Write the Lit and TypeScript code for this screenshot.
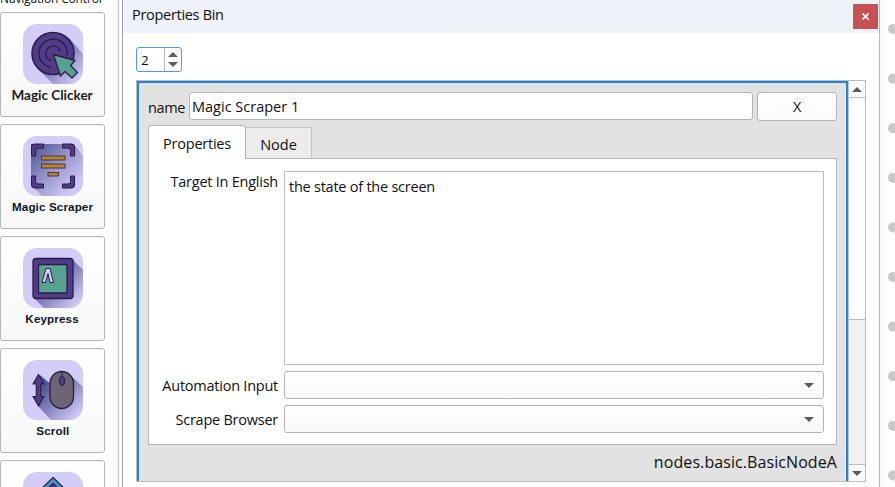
import { LitElement, html, css, svg, nothing } from "lit";
import { customElement, property } from "lit/decorators.js";

const ink = "#2b1b45";

const glyphs: Record<string, unknown> = {
  clicker: svg`
    <path d="M46 14L60 30V60H30L15 45Z" fill="url(#shade)"/>
    <circle cx="30" cy="29.500" r="21" fill="#513c89" stroke="${ink}" stroke-width="1.500"/>
    <path d="M28 43.500A14.300 14.300 0 1 1 44.300 31M28.500 36.500A7.300 7.300 0 1 1 37 27" fill="none" stroke="${ink}" stroke-width="1.300"/>
    <path d="M30.500 30.500L52 36.500L47.500 41.500L54.500 48.500L49 54L42 47.500L37.500 52Z" fill="#54a28f" stroke="${ink}" stroke-width="1.300" stroke-linejoin="round"/>`,
  scraper: svg`
    <path d="M8 8H51L60 20V60H19L8 49Z" fill="url(#shade-wide)"/>
    <g fill="#513c89" stroke="${ink}" stroke-width="1">
      <path d="M8.500 20V11Q8.500 8 11.500 8H20.500V12H15Q12.500 12 12.500 14.500V20Z"/>
      <path d="M51.500 20V11Q51.500 8 48.500 8H39.500V12H45Q47.500 12 47.500 14.500V20Z"/>
      <path d="M8.500 40V49Q8.500 52 11.500 52H20.500V48H15Q12.500 48 12.500 45.500V40Z"/>
      <path d="M51.500 40V49Q51.500 52 48.500 52H39.500V48H45Q47.500 48 47.500 45.500V40Z"/>
    </g>
    <g fill="#b98526" stroke="#4b3148" stroke-width="1">
      <rect x="18.500" y="20" width="23.500" height="4"/>
      <rect x="18.500" y="28" width="23.500" height="4"/>
      <rect x="25" y="36.500" width="10.500" height="3.500"/>
    </g>`,
  keypress: svg`
    <path d="M49 11L60 22V60H21L10 49Z" fill="url(#shade)"/>
    <rect x="10" y="10.500" width="40" height="40" rx="3" fill="#513c89" stroke="${ink}" stroke-width="1.300"/>
    <rect x="15.500" y="16.500" width="28.500" height="28.500" rx="1" fill="#54a28f" stroke="${ink}" stroke-width="1.300"/>
    <path d="M19 34.500L23 20.500H27L30.500 34.500H27L25 25.500L22.500 34.500Z" fill="#dcd0fb" stroke="${ink}" stroke-width="1" stroke-linejoin="round"/>`,
  scroll: svg`
    <path d="M17 15L30 26V44L48 16L60 27V60H28L15 46Z" fill="url(#shade)"/>
    <path d="M15.500 14.500L21 24H17.700V36.500H21L15.500 46L10 36.500H13.300V24H10Z" fill="#513c89" stroke="${ink}" stroke-width="1.200" stroke-linejoin="round"/>
    <rect x="27" y="11.500" width="23.500" height="37" rx="11.750" fill="#6d6574" stroke="${ink}" stroke-width="1.300"/>
    <path d="M39 11.500V17" stroke="${ink}" stroke-width="1"/>
    <rect x="36.600" y="16.500" width="4.800" height="9" rx="2.400" fill="#513c89" stroke="${ink}" stroke-width="1"/>`,
  arrow: svg`
    <path d="M30 5.500L44 19V30H16V19Z" fill="#4591c4" stroke="${ink}" stroke-width="1.200"/>
    <path d="M30 11.500L38 19.500V30H22V19.500Z" fill="#513c89" stroke="${ink}" stroke-width="1.200"/>`,
};

@customElement("tool-button")
export class ToolButton extends LitElement {
  @property() glyph = "";
  @property() label = "";
  @property({ type: Boolean, reflect: true }) humanist = false;

  static styles = css`
    :host {
      box-sizing: border-box;
      flex: none;
      width: 105px;
      height: 105px;
      border: 1px solid #b5b5b5;
      border-radius: 3px;
      background: linear-gradient(#fff, #f8f8f8);
      display: flex;
      flex-direction: column;
      align-items: center;
      padding-top: 11px;
      font: bold 10.5px/14px "Liberation Sans", sans-serif;
      color: #0e171f;
    }
    :host([humanist]) {
      font: bold 14px/16px Lato, sans-serif;
      color: #1c1c1c;
    }
    svg {
      display: block;
      width: 60px;
      height: 60px;
    }
    .label {
      margin-top: 4px;
      white-space: nowrap;
      letter-spacing: 0.1px;
      transform: scaleX(1.11);
    }
    :host([humanist]) .label {
      margin-top: 3px;
      letter-spacing: 0;
      transform: scaleX(0.965);
    }
  `;

  render() {
    return html`
      <svg viewBox="0 0 60 60">
        <defs>
          <linearGradient id="shade" gradientUnits="userSpaceOnUse" x1="24" y1="24" x2="55" y2="55">
            <stop offset="0" stop-color="#535792" />
            <stop offset="0.5" stop-color="#8d8dc5" />
            <stop offset="1" stop-color="#d0c9f6" />
          </linearGradient>
          <linearGradient id="shade-wide" gradientUnits="userSpaceOnUse" x1="8" y1="8" x2="52" y2="52">
            <stop offset="0" stop-color="#4a4f8a" />
            <stop offset="0.5" stop-color="#9292c9" />
            <stop offset="1" stop-color="#d0c9f6" />
          </linearGradient>
          <clipPath id="tile"><rect width="60" height="60" rx="14" /></clipPath>
        </defs>
        <g clip-path="url(#tile)">
          <rect width="60" height="60" fill="#d4cdf8" />
          ${glyphs[this.glyph] ?? nothing}
        </g>
      </svg>
      <span class="label">${this.label}</span>
    `;
  }
}

const triangle = (up = false) => html`
  <svg class="tri" width="10" height="5" viewBox="0 0 10 5">
    <path d=${up ? "M0 5L5 0L10 5Z" : "M0 0H10L5 5Z"} fill="#5c5c5c" />
  </svg>
`;

@customElement("app-root")
export class AppRoot extends LitElement {
  static styles = css`
    :host {
      display: flex;
      width: 895px;
      height: 487px;
      overflow: hidden;
      background: #fff;
      font: 14.5px/20px "Open Sans", "Noto Sans", sans-serif;
      letter-spacing: -0.24px;
      color: #111;
    }
    * {
      box-sizing: border-box;
    }
    svg {
      display: block;
    }
    .tools {
      flex: none;
      width: 119px;
      border-right: 1px solid #bdbdbd;
      background: linear-gradient(90deg, #fff 108px, #f8f8f8);
      display: flex;
      flex-direction: column;
      gap: 7px;
      overflow: hidden;
    }
    .tools-title {
      flex: none;
      height: 5px;
      display: flex;
      align-items: flex-end;
      font-size: 12px;
      line-height: 13px;
      letter-spacing: -0.16px;
      white-space: nowrap;
    }
    .window {
      flex: none;
      width: 758px;
      margin-left: 3px;
      border-left: 1px solid #a0a0a0;
      border-right: 1px solid #b8b8b8;
      display: flex;
      flex-direction: column;
    }
    .titlebar {
      height: 33px;
      flex: none;
      display: flex;
      justify-content: space-between;
      padding: 4px 1px 0 9px;
      background: linear-gradient(90deg, #eff2fb, #edf2f7);
    }
    .title {
      margin-top: 1px;
      letter-spacing: -0.3px;
    }
    .close {
      width: 25px;
      height: 25px;
      background: #c75050;
      display: grid;
      place-items: center;
    }
    .spin {
      margin: 14px 0 0 13px;
      flex: none;
      width: 46px;
      height: 25px;
      border: 1px solid #4c9de8;
      border-radius: 3px;
      display: flex;
    }
    .spin-value {
      width: 28px;
      padding: 2px 0 0 4px;
      border-right: 1px solid #b8b8b8;
      font-size: 13.5px;
    }
    .spin-steps {
      flex: 1;
      display: flex;
      flex-direction: column;
      align-items: center;
      justify-content: center;
      gap: 5px;
      background: #fdfdfd;
      border-radius: 0 3px 3px 0;
    }
    .scroll-area {
      margin: 8px 0 0 13px;
      width: 730px;
      height: 402px;
      flex: none;
      border: 1px solid #bcbcbc;
      display: flex;
    }
    .node {
      width: 711px;
      flex: none;
      background: #e2e2e2;
      border: 2px solid #2482dc;
      border-bottom: 0;
      padding: 9px 9px 0 9px;
      display: flex;
      flex-direction: column;
    }
    .name-row {
      display: flex;
      height: 29px;
      flex: none;
    }
    .name-label {
      width: 41px;
      padding-top: 6px;
      letter-spacing: -0.4px;
    }
    .name-input {
      width: 564px;
      height: 28px;
      background: #fff;
      border: 1px solid #b5b5b5;
      border-radius: 3px;
      padding: 4px 2px;
      letter-spacing: 0;
    }
    .remove {
      margin-left: 4px;
      width: 80px;
      border: 1px solid #b5b5b5;
      border-radius: 3px;
      background: linear-gradient(#fff, #fafafa);
      text-align: center;
      padding-top: 4px;
    }
    .tabs {
      margin-top: 4px;
      height: 34px;
      flex: none;
      display: flex;
      align-items: flex-end;
    }
    .tab {
      border: 1px solid #bababa;
      text-align: center;
    }
    .tab-active {
      width: 98px;
      height: 34px;
      background: #fff;
      border-color: #b5b5b5;
      border-bottom: 0;
      border-radius: 3px 3px 0 0;
      padding-top: 8px;
      position: relative;
    }
    .tab-idle {
      width: 66px;
      height: 32px;
      border-left: 0;
      background: #ececec;
      padding-top: 7px;
      border-color: #c3c3c3 #c3c3c3 #b5b5b5;
      letter-spacing: 0;
    }
    .pane {
      margin-top: -1px;
      height: 287px;
      flex: none;
      border: 1px solid #b5b5b5;
      background: #fff;
      padding: 12px 12px 0 0;
      display: grid;
      grid-template-columns: 129px 540px;
      grid-template-rows: 194px 28px 28px;
      column-gap: 6px;
      row-gap: 6px;
    }
    .field-label {
      padding-top: 1px;
      text-align: right;
      white-space: nowrap;
    }
    .field-label.combo-label {
      padding-top: 5px;
    }
    .area {
      border: 1px solid #bcbcbc;
      padding: 5px 4px;
    }
    .combo {
      border: 1px solid #b5b5b5;
      border-radius: 3px;
      background: linear-gradient(#fff, #f9f9f9);
      display: flex;
      align-items: center;
      justify-content: flex-end;
      padding-right: 9px;
    }
    .type-name {
      text-align: right;
      font-size: 16px;
      line-height: 22px;
      margin-top: 6px;
      letter-spacing: 0.08px;
    }
    .scrollbar {
      flex: 1;
      border-left: 1px solid #c4c4c4;
      background: #f1f1f1;
      display: flex;
      flex-direction: column;
    }
    .step {
      height: 16px;
      background: #fff;
      display: grid;
      place-items: center;
      flex: none;
    }
    .thumb {
      height: 223px;
      border-top: 1px solid #bcbcbc;
      border-bottom: 1px solid #bcbcbc;
      background: #fff;
    }
    .step-down {
      height: 17px;
      margin-top: auto;
      border-top: 1px solid #bcbcbc;
    }
    .canvas {
      flex: 1;
      background: linear-gradient(90deg, #f8f8f8, #fff 10px);
      display: flex;
      justify-content: flex-end;
    }
  `;

  render() {
    const tools = [
      { glyph: "clicker", label: "Magic Clicker" },
      { glyph: "scraper", label: "Magic Scraper" },
      { glyph: "keypress", label: "Keypress" },
      { glyph: "scroll", label: "Scroll" },
      { glyph: "arrow", label: "" },
    ];
    const dots = Array.from({ length: 10 }, (_, i) => 29 + i * 49.6);
    return html`
      <div class="tools">
        <div class="tools-title">Navigation Control</div>
        ${tools.map(
          (t) => html`<tool-button
            glyph=${t.glyph}
            label=${t.label}
            ?humanist=${t.glyph === "clicker"}
          ></tool-button>`
        )}
      </div>
      <div class="window">
        <div class="titlebar">
          <span class="title">Properties Bin</span>
          <div class="close">
            <svg width="7" height="7" viewBox="0 0 7 7">
              <path d="M0.500 0.500L6.500 6.500M6.500 0.500L0.500 6.500" stroke="#fff" stroke-width="1.700" />
            </svg>
          </div>
        </div>
        <div class="spin">
          <div class="spin-value">2</div>
          <div class="spin-steps">${triangle(true)}${triangle()}</div>
        </div>
        <div class="scroll-area">
          <div class="node">
            <div class="name-row">
              <div class="name-label">name</div>
              <div class="name-input">Magic Scraper 1</div>
              <div class="remove">X</div>
            </div>
            <div class="tabs">
              <div class="tab tab-active">Properties</div>
              <div class="tab tab-idle">Node</div>
            </div>
            <div class="pane">
              <div class="field-label">Target In English</div>
              <div class="area">the state of the screen</div>
              <div class="field-label combo-label">Automation Input</div>
              <div class="combo">${triangle()}</div>
              <div class="field-label combo-label">Scrape Browser</div>
              <div class="combo">${triangle()}</div>
            </div>
            <div class="type-name">nodes.basic.BasicNodeA</div>
          </div>
          <div class="scrollbar">
            <div class="step">${triangle(true)}</div>
            <div class="thumb"></div>
            <div class="step step-down">${triangle()}</div>
          </div>
        </div>
      </div>
      <div class="canvas">
        <svg width="7" height="487" viewBox="0 0 7 487">
          ${dots.map((y) => svg`<circle cx="5" cy=${y} r="5" fill="#c8c8c8"/>`)}
        </svg>
      </div>
    `;
  }
}
